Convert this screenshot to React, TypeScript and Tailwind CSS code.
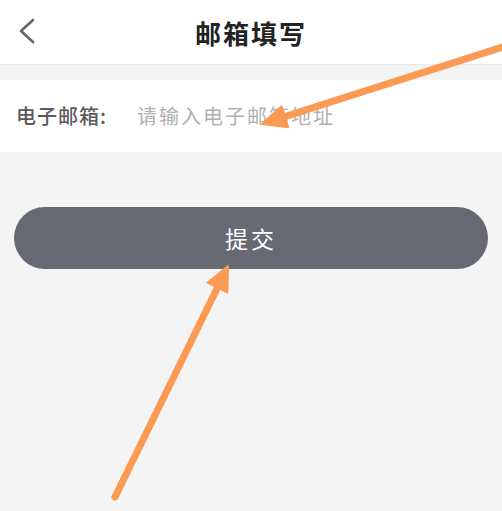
const FONT = { fontFamily: '"Noto Sans CJK SC", "Noto Sans", sans-serif' };

function Arrow({ x1, y1, x2, y2 }: { x1: number; y1: number; x2: number; y2: number }) {
  // shaft stops a bit before the tip, the head is a filled triangle
  const dx = x2 - x1;
  const dy = y2 - y1;
  const len = Math.hypot(dx, dy);
  const ux = dx / len;
  const uy = dy / len;
  const head = 24;
  const half = 11;
  const bx = x2 - ux * head;
  const by = y2 - uy * head;
  const px = -uy;
  const py = ux;
  return (
    <g>
      <line x1={x1} y1={y1} x2={bx + ux * 4} y2={by + uy * 4} stroke="#fb9a52" strokeWidth={7} strokeLinecap="round" />
      <polygon
        points={`${x2},${y2} ${bx + px * half},${by + py * half} ${bx - px * half},${by - py * half}`}
        fill="#fb9a52"
        strokeLinejoin="round"
        stroke="#fb9a52"
        strokeWidth={2}
      />
    </g>
  );
}

export default function App() {
  return (
    <div className="relative w-[502px] h-[511px] overflow-hidden bg-[#f4f4f4]" style={FONT}>
      {/* header */}
      <header className="relative h-[65px] bg-white border-b border-[#e8e8e8] flex items-center justify-center">
        <button className="absolute left-[14px] top-[16px] text-[#666]">
          <svg width={26} height={30} viewBox="0 0 26 30" fill="none">
            <polyline points="19,4 7,15 19,26" stroke="currentColor" strokeWidth={2.6} strokeLinecap="round" strokeLinejoin="round" />
          </svg>
        </button>
        <h1 className="text-[26px] font-semibold text-[#222] tracking-[2px]">邮箱填写</h1>
      </header>

      {/* email row */}
      <div className="mt-[15px] h-[72px] bg-white flex items-center px-[16px]">
        <span className="text-[20px] font-medium text-[#5a5a5a] tracking-[1px] w-[121px] shrink-0">电子邮箱:</span>
        <input
          className="flex-1 bg-transparent outline-none text-[20px] tracking-[2px] text-[#333] placeholder:text-[#b0b0b0]"
          placeholder="请输入电子邮箱地址"
          style={FONT}
        />
      </div>

      {/* submit */}
      <div className="px-[14px] pt-[55px]">
        <button className="w-full h-[62px] rounded-full bg-[#666874] text-white text-[23px] tracking-[3px]">
          提交
        </button>
      </div>

      {/* annotation arrows */}
      <svg className="absolute inset-0 pointer-events-none" width={502} height={511}>
        <Arrow x1={506} y1={46} x2={262} y2={124} />
        <Arrow x1={115} y1={497} x2={228} y2={266} />
      </svg>
    </div>
  );
}
